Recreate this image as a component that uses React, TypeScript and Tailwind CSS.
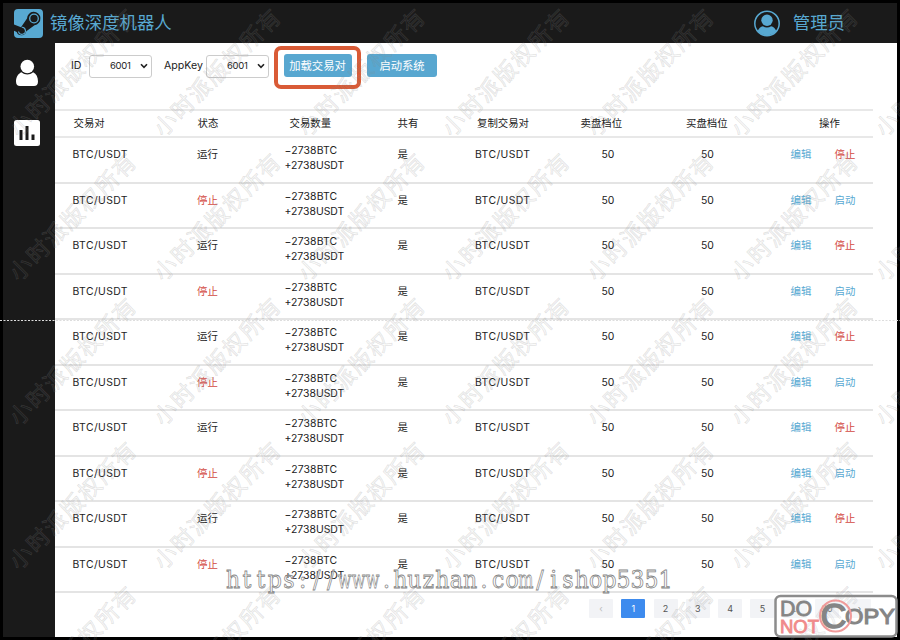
import clsx from "clsx";

const rows = Array.from({ length: 10 }, (_, i) => ({
    pair: "BTC/USDT",
    running: i % 2 === 0,
    sell: "−2738BTC",
    buy: "+2738USDT",
}));

const watermarkX = [72.5, 217, 361.3, 505.6, 649.9, 794.2, 938.5];
const watermarkY = [71.5, 216, 360.5, 504.5, 649];
const siteUrl = "https://www.huzhan.com/ishop5351";

const Select = () => (
    <div className="flex h-[23px] w-[63px] items-center rounded-[3px] border border-[#ccc] pl-[20px] text-[9.5px]">
        <span className="w-[21px] tracking-[-0.3px]">6001</span>
        <svg className="ml-[9px]" width="8" height="6" viewBox="0 0 8 6" fill="none">
            <path d="M1 1.2 4 4.4 7 1.2" stroke="#222" strokeWidth="1.6" />
        </svg>
    </div>
);

const SteamLogo = () => (
    <svg className="ml-[11px]" width="29" height="29" viewBox="0 0 29 29">
        <rect width="29" height="29" rx="4" fill="#58a9d2" />
        <path d="M0 15.5 7 18.3 13 9.5A6.7 6.7 0 1 1 20.5 16.2L12.3 22.3A5 5 0 0 1 2.7 23L0 21.8z" fill="#1a1a1a" />
        <circle cx="20" cy="9.5" r="4.3" fill="none" stroke="#58a9d2" strokeWidth="1.3" />
        <path d="M4.5 22.5a3.5 3.5 0 1 0 3.2-4.2" fill="none" stroke="#58a9d2" strokeWidth="1.1" />
    </svg>
);

const Header = () => (
    <header className="flex h-10 shrink-0 items-center bg-[#1a1a1a] text-[17.4px] text-[#58a9d2]">
        <SteamLogo />
        <span className="ml-[7px]">镜像深度机器人</span>
        <svg className="ml-auto" width="26" height="27" viewBox="0 0 26 27">
            <circle cx="13" cy="13.5" r="12.2" fill="none" stroke="currentColor" strokeWidth="1.5" />
            <circle cx="13" cy="10.3" r="5.7" fill="currentColor" />
            <path d="M3.6 21.2c1.3-3 3-4.6 5.3-5 2.5 1.7 5.7 1.7 8.2 0 2.3.4 4 2 5.3 5-5 5.4-13.8 5.4-18.8 0z" fill="currentColor" />
        </svg>
        <span className="mr-[52px] ml-[13px]">管理员</span>
    </header>
);

const Sidebar = () => (
    <nav className="flex w-[52px] shrink-0 flex-col bg-[#1a1a1a] pt-[16px] pl-[11px] text-white">
        <svg width="26" height="28" viewBox="0 0 26 28" fill="currentColor">
            <circle cx="13.3" cy="7.5" r="6.8" />
            <path d="M7.5 13.2c3.5 3 8.1 3 11.6 0 3.3 1.4 4.9 4.8 4.9 9.3 0 3-1.5 4.6-4 4.6H6c-2.5 0-4-1.6-4-4.6 0-4.5 2.2-7.9 5.5-9.3z" />
        </svg>
        <svg className="mt-[33px]" width="26" height="26" viewBox="0 0 26 26">
            <rect width="26" height="26" rx="2.5" fill="white" />
            <path d="M7 10v10M13 6v14M19 14.5v5.5" stroke="#1a1a1a" strokeWidth="3" />
        </svg>
    </nav>
);

const Toolbar = () => (
    <div className="flex h-[66px] shrink-0 items-start pt-[3px]">
        <div className="flex h-[40px] items-center pl-[16px] text-[10.6px]">
            <span className="w-[18px]">ID</span>
            <Select />
            <span className="ml-[12px] w-[42px]">AppKey</span>
            <Select />
        </div>
        <div className="ml-[5px] flex h-[43px] w-[87px] justify-center rounded-[7px] border-[4px] border-[#d95b36] pt-[4px]">
            <button className="h-[23px] w-[68px] rounded-[3px] bg-[#58a7d0] pt-px text-[11.3px] text-white">加载交易对</button>
        </div>
        <button className="mt-[8px] ml-[6px] h-[23px] w-[70px] rounded-[3px] bg-[#58a7d0] pt-px text-[11.3px] text-white">启动系统</button>
    </div>
);

const PairTable = () => (
    <div className="w-[818px] text-[10.4px]">
        <div className="grid h-[29.3px] grid-cols-[124px_92px_108px_79.5px_103.5px_105.5px_133px_1fr] items-center border-y-2 border-[#e8e8e8] pl-[18.5px]">
            <div>交易对</div>
            <div>状态</div>
            <div>交易数量</div>
            <div>共有</div>
            <div>复制交易对</div>
            <div>卖盘档位</div>
            <div>买盘档位</div>
            <div>操作</div>
        </div>
        {rows.map((row, i) => (
            <div
                key={i}
                className="grid h-[45.5px] grid-cols-[124.5px_87.5px_113px_77.5px_126.5px_99.5px_89.5px_44px_1fr] border-b-2 border-[#e4e4e4] pt-[9.2px] pl-[17.5px] leading-[16px]"
            >
                <div className="tracking-[0.4px]">{row.pair}</div>
                <div className={clsx(!row.running && "text-[#d34a43]")}>{row.running ? "运行" : "停止"}</div>
                <div className="-mt-[4.4px] leading-[15px]">
                    <div className="tracking-[0.15px]">{row.sell}</div>
                    <div>{row.buy}</div>
                </div>
                <div>是</div>
                <div className="tracking-[0.4px]">{row.pair}</div>
                <div>50</div>
                <div>50</div>
                <div className="text-[#58a9d2]">编辑</div>
                <div className={row.running ? "text-[#d34a43]" : "text-[#58a9d2]"}>{row.running ? "停止" : "启动"}</div>
            </div>
        ))}
    </div>
);

const Pager = () => (
    <div className="mt-[6px] ml-[534px] flex gap-[8.3px] text-[9px] text-[#555]">
        {["‹", "1", "2", "3", "4", "5", "…", "20", "›"].map((page) => (
            <div
                key={page}
                className={clsx(
                    "flex h-[19px] w-[24px] shrink-0 items-center justify-center rounded-[1px]",
                    page === "1" ? "bg-[#3d8bee] text-white" : "bg-[#f2f3f6]",
                    page === "‹" && "text-[#bbb]"
                )}
            >
                {page}
            </div>
        ))}
    </div>
);

const Watermarks = () => (
    <svg className="pointer-events-none absolute inset-0" width="900" height="640" viewBox="0 0 900 640">
        <g
            fontFamily="'Noto Sans CJK SC', sans-serif"
            fontSize="22.5"
            letterSpacing="1.8"
            fontWeight="400"
            textAnchor="middle"
            fill="#888"
            fillOpacity="0.03"
            stroke="#888"
            strokeOpacity="0.24"
            strokeWidth="0.8"
        >
            {watermarkY.map((y) =>
                watermarkX.map((x) => (
                    <text key={`${x}-${y}`} transform={`translate(${x} ${y}) rotate(-45)`} y="9">
                        小时派版权所有
                    </text>
                ))
            )}
        </g>
        <path d="M0 320.5h900" stroke="#ddd" strokeWidth="1" strokeDasharray="2 1.5" />
        <g fontFamily="'DejaVu Serif', serif" fontSize="25" textAnchor="middle" fill="white" fillOpacity="0.6" stroke="#858585" strokeWidth="0.8">
            {siteUrl.split("").map((char, i) => {
                const squeeze = char === "w" || char === "m" ? 0.64 : 0.88;
                return (
                    <text key={i} transform={`translate(${233 + i * 13.95} 587.5) scale(${squeeze} 1)`}>
                        {char}
                    </text>
                );
            })}
        </g>
        <g fontFamily="'Liberation Sans', sans-serif">
            <rect x="775.5" y="596" width="121" height="40.5" rx="5" fill="white" fillOpacity="0.2" stroke="#8c8c8c" strokeWidth="2.5" />
            <g fill="#858585" stroke="#858585">
                <text x="780" y="615.5" fontSize="22.5" strokeWidth="0.9" textLength="32" lengthAdjust="spacingAndGlyphs">DO</text>
                <text x="820.5" y="628" fontSize="35" strokeWidth="1.5" textLength="26" lengthAdjust="spacingAndGlyphs">C</text>
                <text x="845" y="624" fontSize="22" strokeWidth="1.1" textLength="50" lengthAdjust="spacingAndGlyphs">OPY</text>
            </g>
            <text x="780" y="632.5" fontSize="19" fill="#f08b8b" stroke="#f08b8b" strokeWidth="0.9" textLength="39" lengthAdjust="spacingAndGlyphs">NOT</text>
            <circle cx="835.5" cy="616" r="15.5" fill="none" stroke="#f09a9a" strokeWidth="2" />
        </g>
    </svg>
);

export default function App() {
    return (
        <div className="relative h-[640px] w-[900px] overflow-hidden bg-black p-[3px] font-['Inter','Noto_Sans_CJK_SC',sans-serif] text-[#222]">
            <div className="flex h-[634px] flex-col bg-white">
                <Header />
                <div className="flex min-h-0 flex-1">
                    <Sidebar />
                    <main className="flex min-w-0 flex-1 flex-col overflow-hidden">
                        <Toolbar />
                        <PairTable />
                        <Pager />
                    </main>
                </div>
            </div>
            <Watermarks />
        </div>
    );
}
